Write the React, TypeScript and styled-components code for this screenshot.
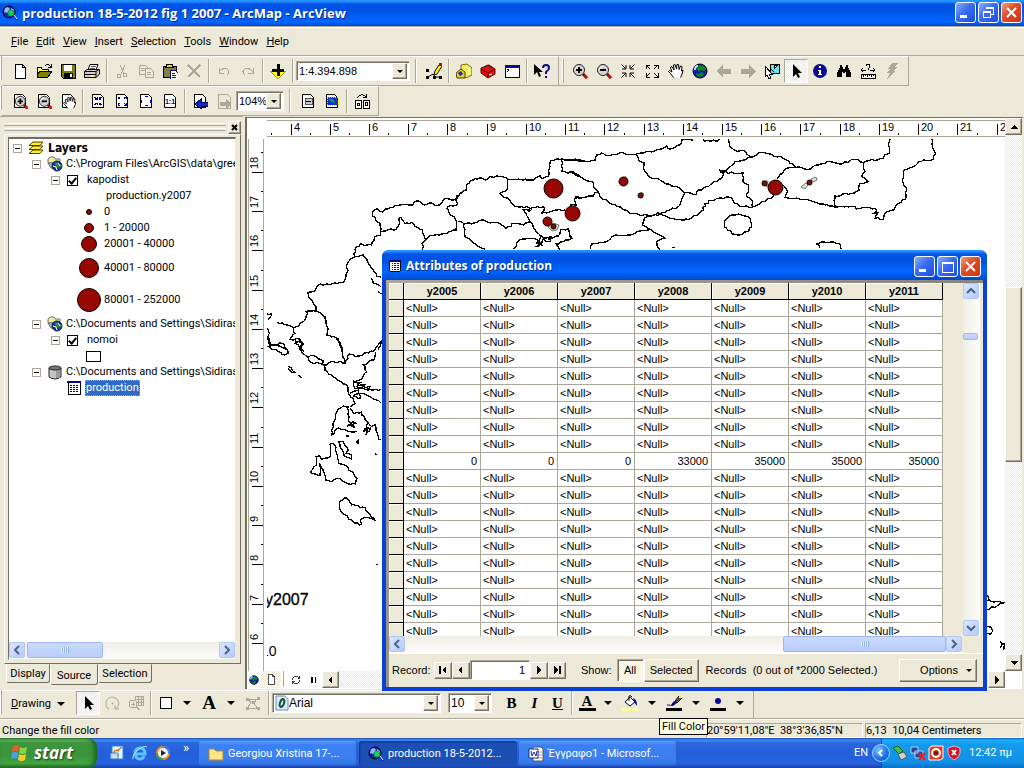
import React from 'react';
import styled, { createGlobalStyle, css } from 'styled-components';

const face = '#ece9d8';
const shade = '#aca899';
const dark = '#716f64';
const dither = 'repeating-conic-gradient(#ffffff 0 25%, #ece9d8 0 50%) 0 0 / 2px 2px';
const ui = 'Roboto, "Liberation Sans", sans-serif';
const classic = '"Liberation Sans", sans-serif';
const caption = '"Open Sans", "Noto Sans", sans-serif';

const GlobalStyle = createGlobalStyle`
  * { box-sizing: border-box; }
  html, body { margin: 0; padding: 0; }
  body { background: ${face}; font: 11px/16px ${ui}; color: #000; overflow: hidden; }
  button, input, select { font: inherit; color: inherit; margin: 0; }
  svg { display: block; flex: none; }
`;

const raised = css`
  background: ${face};
  border: 1px solid;
  border-color: #fff ${dark} ${dark} #fff;
  box-shadow: inset -1px -1px 0 ${shade};
`;
const sunken = css`
  border: 1px solid;
  border-color: ${shade} #fff #fff ${shade};
  box-shadow: inset 1px 1px 0 ${dark};
`;

/* ---------- icons ---------- */

const page = <path d="M2.5 1.500h8l3 3v10h-11z" fill="#fff" stroke="#000" />;
const lens = (
  <>
    <path d="M11 11l4 4" stroke="#600" strokeWidth="3" />
    <path d="M12 12l3 3" stroke="#e01010" strokeWidth="2" />
    <circle cx="7" cy="7" r="5.500" fill="#d4d4d4" stroke="#222" />
    <path d="M3 7q0-3 4-4" stroke="#fff" fill="none" />
  </>
);
const plus = <path d="M4 7h6M7 4v6" stroke="#000" strokeWidth="2" />;
const minus = <path d="M4 7h6" stroke="#000" strokeWidth="2" />;
const hand = (
  <path
    d="M5.500 14.500L2.500 10.500 .5 8.500 1.500 7.500 4 9 2.500 4.500 4 3.500 6 7 5.500 2 7 1.500 8.500 6 9 1.500 10.500 1.500 11 6.500 12.500 3 14 3.500 13.500 8 15 7 14.500 10 12.500 14.500"
    fill="#fff"
    stroke="#000"
  />
);
const earth = (
  <>
    <circle cx="8" cy="8" r="7" fill="#0a1fa8" stroke="#000" />
    <path d="M7 2l5 1 2 3-2 2-3-1-2 2-2-3zM4 10l3 1 3-2 2 2-3 3-4-1z" fill="#0a8a1c" />
    <path d="M3 7q0-4 3-4" stroke="#cfd6ff" strokeWidth="2" fill="none" />
  </>
);
const earthLens = (
  <>
    <circle cx="7" cy="7" r="6" fill="#1626b0" stroke="#000" />
    <path d="M3 3l3-1 2 2-3 4-3-1zM9 3l3 2-1 2-2-1z" fill="#9ab4ff" />
    <circle cx="9" cy="8" r="3" fill="#19d34c" stroke="#0a5" />
    <path d="M11 10l4 5" stroke="#1a1aff" strokeWidth="2" />
    <path d="M12 10l3 4" stroke="#fff" />
  </>
);
const arrowHead = <path d="M5 1v13l3-3 2 4 2-1-2-4h4z" fill="#000" />;
const table = (
  <>
    <path d="M2 2h12v12H2z" fill="#fff" stroke="#000" />
    <path d="M1 2h14" stroke="#0a0a80" strokeWidth="2" />
    <path d="M4 5h2M7 5h2M10 5h2M4 7h2M7 7h2M10 7h2M4 9h2M7 9h2M10 9h2M4 11h2M7 11h2M10 11h2" transform="translate(0 .5)" stroke="#000" />
  </>
);
const globeStack = (
  <>
    <path d="M1 3l2-2h4l1 2h5v4H1z" fill="#eee9a0" stroke="#777" />
    <path d="M1 7h9v5H4z" fill="#bbb" stroke="#666" />
    <circle cx="10" cy="10" r="5" fill="#1530c0" stroke="#123" />
    <path d="M8 6l3 1 1 4-3 1zM12 8l3 1-1 3z" fill="#18a030" />
    <path d="M6 10l3 1 1 3M11 7l2 3" stroke="#fff" fill="none" />
    <path d="M11 11l2-1-1 3z" fill="#d22" />
  </>
);

const icons: Record<string, React.ReactNode> = {
  none: null,
  new: <path d="M3 1h7l3 3v11H3zM10 1v3h3" fill="#fff" stroke="#000" />,
  open: (
    <>
      <path d="M1 13V4h4l1 2h6v3" fill="#ffff60" stroke="#000" />
      <path d="M1 13l3-5h12l-4 6H1z" fill="#808000" stroke="#000" />
      <path d="M9 3q3-3 5 0l1 1M15 1v3h-3" stroke="#000" fill="none" />
    </>
  ),
  save: (
    <>
      <path d="M1 1h14v14H3l-2-2z" fill="#808000" stroke="#000" />
      <path d="M4 2h8v6H4z" fill="#fff" />
      <path d="M4 10h9v5H4z" fill="#000" />
      <path d="M10 11h2v3h-2z" fill="#fff" />
    </>
  ),
  print: (
    <>
      <path d="M3.500 8L6 1.500h8L12 7" fill="#fff" stroke="#000" />
      <path d="M.5 8.500L3 6.500h12.500V11L12 14.500H.5z" fill="#d4d0c8" stroke="#000" />
      <path d="M.5 8.500H12v6M12 8.500l3-2M.5 11.500H12" stroke="#000" fill="none" />
      <path d="M7 3.500h5M6 5.500h5" stroke="#555" />
      <path d="M7 12h3v2H7z" fill="#ff0" />
    </>
  ),
  cut: (
    <>
      <path d="M6 2l4 9M11 2L7 11" stroke={shade} />
      <circle cx="5" cy="13" r="2" fill="none" stroke={shade} />
      <circle cx="11" cy="12" r="2" fill="none" stroke={shade} />
    </>
  ),
  copy: (
    <>
      <path d="M1 2h6l2 2v7H1zM3 5h4M3 7h4" fill={face} stroke={shade} />
      <path d="M7 5h5l3 3v6H7zM9 9h4M9 11h4" fill={face} stroke={shade} />
    </>
  ),
  paste: (
    <>
      <path d="M1 3h13v11H1z" fill="#808040" stroke="#000" />
      <path d="M4 4l1-3h5l1 3z" fill="#e8d838" stroke="#000" />
      <path d="M8 7h5l3 3v6H8zM10 10h3M10 12h4M10 14h4" fill="#fff" stroke="#0a0a80" />
    </>
  ),
  remove: <path d="M2 2l12 12M14 2L2 14" stroke={shade} strokeWidth="2" />,
  undo: <path d="M3 5v5h5M3 9q4-5 8-3 4 2 0 6" fill="none" stroke={shade} />,
  redo: <path d="M13 5v5H8M13 9Q9 4 5 6q-4 2 0 6" fill="none" stroke={shade} />,
  add: (
    <>
      <path d="M0 8h16l-8 8z" fill="#ff0" stroke="#a09a20" />
      <path d="M8 1v12M2 7h12" stroke="#000" strokeWidth="3" />
    </>
  ),
  edit: (
    <>
      <path d="M0 6h3v3H0zM0 13h3v3H0zM7 13h3v3H7zM13 13h3v3h-3z" fill="#000" />
      <path d="M2 14l5-3 2 3h5" fill="none" stroke="#000" />
      <path d="M9 8l4-6 3 1-5 8-3 1z" fill="#ff0" stroke="#000" />
      <path d="M13 0h3v3h-3z" fill="#c00" />
    </>
  ),
  catalog: (
    <>
      <path d="M5 2l6-1 5 4v7l-6 3-5-4z" fill="#f4ec58" stroke="#806c00" />
      <path d="M0 10l5-4 4 3v6H1z" fill="#e0d040" stroke="#504000" />
      <path d="M2 10l3-2 2 3-3 2z" fill="#1030b0" />
      <path d="M10 4l3 2v6" stroke="#fff" fill="none" />
    </>
  ),
  toolbox: (
    <>
      <path d="M1 5l8-3 6 4v5l-7 4-7-5z" fill="#e01010" stroke="#600" />
      <path d="M1 6l7 4 7-4M8 10v5" fill="none" stroke="#600" />
      <path d="M4 4l4-2 4 3" fill="none" stroke="#222" />
      <path d="M9 12l3-1" stroke="#fff" />
    </>
  ),
  command: (
    <>
      <path d="M1 2h14v12H1z" fill="#fff" stroke="#000" />
      <path d="M1 3h14" stroke="#0a0a90" strokeWidth="3" />
      <path d="M3 6l2 1-2 2" fill="none" stroke="#000" />
    </>
  ),
  whats: (
    <>
      <path d="M0 1v11l3-3 2 5 2-1-2-4h4z" fill="#000" />
      <path d="M9 5q0-3 3-3t3 3q0 2-3 4v2M12 13v2" fill="none" stroke="#0a0a90" strokeWidth="2" />
    </>
  ),
  zoomIn: <>{lens}{plus}</>,
  zoomOut: <>{lens}{minus}</>,
  shrink: <path d="M1.500 1.500l4 4M6 2v4H2M14.500 1.500l-4 4M10 2v4h4M1.500 14.500l4-4M6 14v-4H2M14.500 14.500l-4-4M10 14v-4h4" fill="none" stroke="#000" />,
  expand: <path d="M6 6L2 2M2 6V2h4M10 6l4-4M10 2h4v4M6 10l-4 4M2 10v4h4M10 10l4 4M10 14h4v-4" fill="none" stroke="#000" />,
  hand,
  earth,
  back: <path d="M0 8l7-6v4h8v5H7v4z" fill={shade} />,
  forward: <path d="M16 8L9 2v4H1v5h8v4z" fill={shade} />,
  select: (
    <>
      <path d="M6 1h9v9H6z" fill="#60e8f0" stroke="#000" />
      <path d="M6 5l4 4M10 2l4 0-4 4z" stroke="#000" fill="#fff" />
      <path d="M1 3v11l2-2 2 4 2-1-2-4h3z" fill="#fff" stroke="#000" />
    </>
  ),
  pointer: arrowHead,
  info: (
    <>
      <circle cx="8" cy="8" r="7" fill="#0a0a90" />
      <path d="M7 3h2v2H7zM6 7h3v4h1v1H6v-1h1V8H6z" fill="#fff" />
    </>
  ),
  find: (
    <path d="M4 2h2v2h1v2h2V4h1V2h2v2l3 6v4h-5V9H9v1H7V9H6v5H1v-4l3-6z" fill="#000" />
  ),
  measure: (
    <>
      <path d="M1 11h14v4H1z" fill="#fff" stroke="#000" />
      <path d="M3 12v2M5 12v1M7 12v2M9 12v1M11 12v2M13 12v1M1 7h5M10 7h5M3 5L1 7l2 2M13 5l2 2-2 2M6 3q0-2 2-2t2 2q0 1-2 3v1" fill="none" stroke="#000" />
    </>
  ),
  bolt: <path d="M8 0h6l-3 4h3L9 8h3L3 16l3-6H3l3-4H4z" fill={shade} />,
  pageIn: <>{page}<g transform="translate(2 2) scale(.9)">{lens}{plus}</g></>,
  pageOut: <>{page}<g transform="translate(2 2) scale(.9)">{lens}{minus}</g></>,
  pageHand: <>{page}<g transform="translate(3 3) scale(.85)">{hand}</g></>,
  pageShrink: <>{page}<path d="M4 4l3 2M7 4v2H5M12 4l-3 2M9 4v2h2M4 12l3-2M7 12v-2H5M12 12l-3-2M9 12v-2h2" fill="none" stroke="#000080" /></>,
  pageExpand: <>{page}<path d="M6 6L4 4M4 6V4h2M10 6l2-2M10 4h2v2M6 10l-2 2M4 10v2h2M10 10l2 2M10 12h2v-2" fill="none" stroke="#000080" /></>,
  pageWhole: <>{page}<path d="M7 3h3v1H7zM7 12h3v1H7zM3 7h1v3H3zM12 7h1v3h-1z" fill="#00a" /></>,
  pageOne: (
    <>
      {page}
      <text x="8" y="11" fontSize="7" fontWeight="700" textAnchor="middle" fill="#000080" fontFamily="Liberation Sans">1:1</text>
    </>
  ),
  pageBack: <>{page}<path d="M3 11l6-5v3h7v4H9v3z" fill="#0a2ad0" stroke="#000040" /></>,
  pageForward: (
    <>
      <path d="M2 1h9l3 3v11H2z" fill={face} stroke={shade} />
      <path d="M16 11l-6-5v3H4v4h6v3z" fill={shade} />
    </>
  ),
  draft: <>{page}<path d="M5 5h7v6H5z" fill="#ccc" stroke="#555" /><path d="M6 8h5" stroke="#000" /></>,
  focus: <>{page}<path d="M3 4h11v8H3z" fill="#1030e0" stroke="#e8e000" strokeDasharray="1 1" /><path d="M5 6l4 0 2 4-4-1z" fill="#18a018" /></>,
  layout: (
    <>
      <path d="M1 7h6v8H1zM9 7h6v8H9zM3 10h2v2H3zM11 9h2v3h-2z" fill="#fff" stroke="#000" />
      <path d="M3 5q4-6 9-1M12 1v3H9" fill="none" stroke="#000" />
    </>
  ),
  layers: (
    <path
      d="M1 13.500l4-3.500h10l-3 3.500zM1 9.500L5 6h10l-3 3.500zM1 5.500L5 2h10l-3 3.500z"
      fill="#ffee20"
      stroke="#4a4400"
    />
  ),
  globeStack,
  database: (
    <>
      <path d="M2 4v9q6 4 12 0V4z" fill="#c4c4c4" stroke="#222" />
      <path d="M9 6h4v8H9z" fill="#999" />
      <ellipse cx="8" cy="4" rx="6" ry="2" fill="#777" stroke="#222" />
    </>
  ),
  table,
  earthLens,
  rotate: <path d="M5 14H4Q1 11 2 7q2-5 7-5 5 1 6 6 0 4-4 6v-4M11 14h4M8 8h1v1H8z" fill="none" stroke={shade} />,
  zoomSel: (
    <>
      <path d="M7 1h8v9H7zM7 4h8M7 7h8M10 1v9M13 1v9" fill="none" stroke={shade} />
      <circle cx="5" cy="9" r="4" fill={face} stroke={shade} />
      <path d="M3 9h4M5 7v4M8 12l4 3" stroke={shade} />
    </>
  ),
  square: <path d="M2 2h11v11H2z" fill="#fff" stroke="#000" />,
  vertices: (
    <>
      <path d="M3 4h9l-3 4 3 5H2l4-5z" fill="none" stroke={shade} />
      <path d="M1 3h3v3H1zM12 2h3v3h-3zM7 6h3v3H7zM1 12h3v3H1zM12 12h3v3h-3z" fill={shade} />
    </>
  ),
  bucket: (
    <>
      <path d="M3 7l5-5 5 5-5 4z" fill="#fff" stroke="#000" />
      <path d="M7 6V1q2-1 3 1" fill="none" stroke="#000" />
      <path d="M11 3q4 1 4 8l-3-4z" fill="#0a0a90" />
      <path d="M0 13h16v3H0z" fill="#ffffa8" />
    </>
  ),
  brush: (
    <>
      <path d="M1 10h3" stroke="#0a0a90" />
      <path d="M4 11l4-5 3 2-4 3z" fill="#0a0a90" />
      <path d="M9 6l4-5 3 2-5 5z" fill="#555" stroke="#000" />
      <path d="M13 0h3v3h-3z" fill="#ff0" />
      <path d="M0 13h16v3H0z" fill="#000" />
    </>
  ),
  dot: (
    <>
      <circle cx="8" cy="6" r="3" fill="#0a0a90" />
      <path d="M0 13h16v3H0z" fill="#000" />
    </>
  ),
  refresh: <path d="M3 8q0-5 5-5 3 0 4 3M13 3v3h-3M13 8q0 5-5 5-3 0-4-3M3 13v-3h3" fill="none" stroke="#000" />,
  pause: <path d="M4 4h2v8H4zM9 4h2v8H9z" fill="#000" />,
  folder: (
    <path d="M1 14V3h5l2 2h7v9z" fill="#ffe48a" stroke="#b98a1c" />
  ),
  word: (
    <>
      <path d="M5 1h8l2 2v12H5z" fill="#fff" stroke="#555" />
      <path d="M8 6h6M8 9h6M8 12h6" stroke="#99a" />
      <path d="M1 3h9v9H1z" fill="#fff" stroke="#1b2a9a" />
      <path d="M3 5l1 5 2-4 2 4 1-5" fill="none" stroke="#1b2a9a" />
    </>
  ),
  outlook: (
    <>
      <path d="M3 1h11v13H3z" fill="#e8f4ff" stroke="#2f86e0" />
      <path d="M10 6q-5-2-5 2 1 4 5 2M8 6l5-4" fill="none" stroke="#d77a12" strokeWidth="1.5" />
      <path d="M1 8h8v6H1z" fill="#cfe6ff" stroke="#1b6fd0" opacity=".8" />
    </>
  ),
  ie: (
    <>
      <path d="M3 9h10q0-6-5-6T3 9q1 5 5 5 3 0 4-3" fill="none" stroke="#5cc4ff" strokeWidth="3" />
      <path d="M1 14Q0 10 6 5t9-3" fill="none" stroke="#c5ebff" />
    </>
  ),
  media: (
    <>
      <circle cx="8" cy="8" r="7" fill="#f58a1f" />
      <path d="M8 1a7 7 0 0 1 7 7H8z" fill="#3a7ff0" />
      <path d="M1 8a7 7 0 0 0 7 7V8z" fill="#36a93b" />
      <circle cx="8" cy="8" r="5" fill="#f4f6ff" />
      <path d="M6 5l5 3-5 3z" fill="#222" />
    </>
  ),
  usb: (
    <>
      <path d="M1 3l5-2 5 5-4 3z" fill="#3fbf3f" stroke="#145c14" />
      <path d="M6 9l6-2 3 5-6 3z" fill="#cfd4da" stroke="#555" />
    </>
  ),
  network: (
    <>
      <path d="M1 2h7v6H1zM5 6h8v7H5z" fill="#29449a" stroke="#bcc7e6" />
      <path d="M9 8l6 7M15 8l-6 7" stroke="#f01818" strokeWidth="2" />
    </>
  ),
  target: (
    <>
      <path d="M1 3l3-2h11v12l-3 2H1z" fill="#e13a1c" stroke="#fff" />
      <circle cx="8" cy="8" r="4" fill="none" stroke="#fff" strokeWidth="2" />
      <circle cx="8" cy="8" r="2" fill="#7a1208" />
    </>
  ),
  shield: (
    <>
      <path d="M8 1l6 2v5q0 4-6 7-6-3-6-7V3z" fill="#d2142a" stroke="#f0b0b0" />
      <path d="M6 5l4 5M10 5l-4 5" stroke="#fff" strokeWidth="2" />
    </>
  ),
};

const smooth = [
  'outlook', 'ie', 'media', 'usb', 'network', 'target', 'shield', 'folder', 'word', 'earthLens', 'pageOne', 'whats',
  'zoomIn', 'zoomOut', 'pageIn', 'pageOut', 'pageHand', 'hand', 'print', 'layers', 'toolbox', 'catalog', 'shrink',
  'earth', 'globeStack', 'database', 'info', 'pointer', 'edit', 'bucket', 'brush', 'dot', 'rotate',
];

function Icon({ name, size = 16 }: { name: string; size?: number }) {
  return (
    <svg
      width={size}
      height={size}
      viewBox="0 0 16 16"
      fill="none"
      shapeRendering={smooth.includes(name) ? 'auto' : 'crispEdges'}
      aria-hidden="true"
    >
      {icons[name]}
    </svg>
  );
}

/* ---------- shared controls ---------- */

const Down = styled.span`
  border: 4px solid transparent;
  border-top-color: #000;
  border-bottom: 0;
`;
const SmallDown = styled(Down)`
  border-width: 3px 3px 0;
`;

const Tool = styled.button<{ $pressed?: boolean; $w?: number }>`
  width: ${(p) => p.$w ?? 24}px;
  height: 24px;
  padding: 0;
  flex: none;
  display: flex;
  align-items: center;
  justify-content: center;
  border: 1px solid transparent;
  background: transparent;
  ${(p) => p.$pressed && css`
    background: ${dither};
    border-color: ${shade} #fff #fff ${shade};
  `}
`;

const Sep = styled.span<{ $gap?: number }>`
  flex: none;
  width: 2px;
  height: 24px;
  margin: 0 ${(p) => p.$gap ?? 2}px;
  border-left: 1px solid ${shade};
  border-right: 1px solid #fff;
`;

const Band = styled.div`
  height: 30px;
  flex: none;
  display: flex;
  align-items: stretch;
`;
const Bar = styled.div<{ $start?: boolean }>`
  display: flex;
  align-items: center;
  padding: 0 4px 0 ${(p) => (p.$start ? 6 : 3)}px;
  border-top: 1px solid #fff;
  border-bottom: 1px solid ${shade};
  border-right: 1px solid ${shade};
`;
const DrawBar = styled(Bar)`
  padding-bottom: 3px;
  border-bottom: 0;
`;
const Grip = styled.span<{ $after?: number }>`
  width: 2px;
  height: 24px;
  flex: none;
  margin-right: ${(p) => p.$after ?? 0}px;
  border-right: 1px solid ${shade};
  border-left: 1px solid #fff;
`;

const ComboBox = styled.label<{ $w: number; $size: number }>`
  ${sunken}
  width: ${(p) => p.$w}px;
  height: 20px;
  flex: none;
  display: flex;
  align-items: center;
  padding: 2px;
  background: #fff;
  font: ${(p) => p.$size}px/16px ${classic};
  select {
    appearance: none;
    flex: 1;
    min-width: 0;
    border: 0;
    padding: 0;
    background: transparent;
  }
`;
const ComboArrow = styled.span`
  ${raised}
  width: 15px;
  height: 16px;
  flex: none;
  display: flex;
  align-items: center;
  justify-content: center;
`;

interface ComboProps { w: number; value: string; label: string; size?: number; icon?: React.ReactNode }
function Combo({ w, value, label, size = 12, icon }: ComboProps) {
  return (
    <ComboBox $w={w} $size={size}>
      {icon}
      <select aria-label={label} defaultValue={value}>
        <option>{value}</option>
      </select>
      <ComboArrow><SmallDown /></ComboArrow>
    </ComboBox>
  );
}

function Tools({ names, pressed, w }: { names: string[]; pressed?: string; w?: number }) {
  return (
    <>
      {names.map((n) => (
        <Tool key={n} aria-label={n} $pressed={n === pressed} $w={w}>
          <Icon name={n} />
        </Tool>
      ))}
    </>
  );
}

/* ---------- application frame ---------- */

const Screen = styled.div`
  height: 100vh;
  display: flex;
  flex-direction: column;
  position: relative;
  background: ${face};
`;

const blueBar = 'linear-gradient(#0997ff 0, #3a93ff 1px, #0055ea 4px, #0050e0 10px, #0062fa 18px, #0066ff 22px, #0048d0 100%)';

const TitleBar = styled.header`
  height: 27px;
  flex: none;
  display: flex;
  align-items: center;
  gap: 4px;
  padding: 0 2px 1px 2px;
  background: ${blueBar};
  border-bottom: 1px solid ${shade};
`;
const Caption = styled.h1<{ $small?: boolean }>`
  flex: 1;
  margin: 0;
  font: 700 ${(p) => (p.$small ? 12 : 13)}px/20px ${caption};
  color: #fff;
  text-shadow: 1px 1px 0 #0a2a8a;
  white-space: nowrap;
`;
const Controls = styled.div`
  display: flex;
  gap: 2px;
`;
const Control = styled.button<{ $close?: boolean }>`
  width: 21px;
  height: 21px;
  padding: 0;
  display: flex;
  align-items: center;
  justify-content: center;
  border: 1px solid #fff;
  border-radius: 3px;
  background: ${(p) =>
    p.$close
      ? 'linear-gradient(135deg, #f0a088, #e0502c 40%, #c83410)'
      : 'linear-gradient(135deg, #8ab0fa, #3a6cf0 45%, #1c4fe0)'};
`;

function WindowControls({ restore }: { restore?: boolean }) {
  return (
    <Controls>
      <Control aria-label="Minimize">
        <svg width="15" height="15" viewBox="0 0 15 15"><path d="M2 10h7v3H2z" fill="#fff" /></svg>
      </Control>
      <Control aria-label={restore ? 'Restore' : 'Maximize'}>
        <svg width="15" height="15" viewBox="0 0 15 15" fill="none" stroke="#fff" shapeRendering="crispEdges">
          {restore
            ? <path d="M5 4V2h7v7h-2M5 3h7M2.5 6.500h7v6h-7zM2 7h8" />
            : <path d="M2 3h11v10H2zM2 4h11" />}
        </svg>
      </Control>
      <Control aria-label="Close" $close>
        <svg width="15" height="15" viewBox="0 0 15 15"><path d="M3 3l9 9M12 3l-9 9" stroke="#fff" strokeWidth="2" /></svg>
      </Control>
    </Controls>
  );
}

const Menu = styled.nav`
  height: 29px;
  flex: none;
  display: flex;
  align-items: center;
  padding: 1px 0 0 7px;
  border-top: 1px solid #fff;
  border-bottom: 1px solid ${shade};
  button {
    border: 0;
    background: none;
    padding: 0 4px;
  }
`;

const Workspace = styled.main`
  flex: 1;
  min-height: 0;
  display: flex;
`;

/* ---------- table of contents ---------- */

const Toc = styled.aside`
  width: 243px;
  flex: none;
  display: flex;
  flex-direction: column;
  padding: 3px 2px 4px 4px;
  border-top: 1px solid ${shade};
`;
const DockBar = styled.div`
  display: flex;
  align-items: center;
  gap: 2px;
  height: 14px;
`;
const DockLines = styled.span`
  flex: 1;
  height: 8px;
  border: 1px solid;
  border-color: #fff transparent ${shade};
  background: linear-gradient(${face} 1px, ${shade} 1px 2px, ${face} 2px 4px, #fff 4px 5px, ${face} 5px);
`;
const DockClose = styled.button`
  ${raised}
  width: 13px;
  height: 13px;
  padding: 0;
  display: flex;
  align-items: center;
  justify-content: center;
`;
const TocFrame = styled.div`
  flex: 1;
  min-height: 0;
  display: flex;
  padding: 2px 4px 3px 3px;
  border: 1px solid;
  border-color: #fff ${dark} ${dark} #fff;
`;
const TocBox = styled.div`
  flex: 1;
  min-width: 0;
  display: flex;
  flex-direction: column;
  justify-content: space-between;
  background: #fff;
  border: 1px solid;
  border-color: ${dark} ${face} ${face} ${dark};
  border-top-width: 2px;
`;
const Tree = styled.ul`
  list-style: none;
  margin: 0;
  padding: 1px 0 0;
  overflow: hidden;
`;
const Node = styled.li<{ $indent: number; $h?: number }>`
  height: ${(p) => p.$h ?? 16}px;
  padding-left: ${(p) => p.$indent}px;
  display: flex;
  align-items: center;
  white-space: nowrap;
`;
const Twisty = styled.button`
  width: 9px;
  height: 9px;
  padding: 0;
  flex: none;
  margin-right: 6px;
  border: 1px solid ${shade};
  background: linear-gradient(#000, #000) center / 5px 1px no-repeat #fff;
`;
const NodeText = styled.span<{ $bold?: boolean; $on?: boolean; $gap?: number }>`
  margin-left: ${(p) => p.$gap ?? 3}px;
  padding: 0 1px;
  ${(p) => p.$bold && css`font-weight: 700; font-size: 12px; font-family: "DejaVu Sans Condensed", sans-serif;`}
  ${(p) => p.$on && css`background: #316ac5; color: #fff; outline: 1px dotted #cfa35a; outline-offset: -1px;`}
`;
const PathText = styled(NodeText)`
  margin-left: 2px;
`;
const Check = styled.input`
  appearance: none;
  width: 11px;
  height: 11px;
  flex: none;
  margin: 0 5px 0 1px;
  border: 1px solid #000;
  background: #fff;
  &:checked::before {
    content: '';
    display: block;
    width: 3px;
    height: 6px;
    margin: 0 auto;
    border: solid #000;
    border-width: 0 2px 2px 0;
    rotate: 40deg;
  }
`;
const CheckLabel = styled.label`
  display: flex;
  align-items: center;
`;
const SymbolCell = styled.span`
  width: 26px;
  flex: none;
  display: flex;
  justify-content: center;
`;
const Disc = styled.span<{ $d: number }>`
  width: ${(p) => p.$d}px;
  height: ${(p) => p.$d}px;
  border-radius: 50%;
  border: 1px solid #000;
  background: #980800;
`;
const Swatch = styled.span`
  width: 15px;
  height: 11px;
  border: 1px solid #000;
  background: #fff;
`;
const TabRow = styled.div`
  display: flex;
  align-items: flex-start;
  height: 22px;
  padding-left: 2px;
`;
const Tab = styled.button<{ $active?: boolean; $w: number }>`
  width: ${(p) => p.$w}px;
  height: ${(p) => (p.$active ? 21 : 19)}px;
  padding: ${(p) => (p.$active ? '3px' : '0')} 0 0;
  border: 1px solid;
  border-color: ${face} ${dark} ${dark} #fff;
  border-radius: 0 0 3px 3px;
  background: ${face};
`;

/* ---------- Luna scroll bars ---------- */

const LunaBar = styled.div<{ $vertical?: boolean; $corner?: boolean }>`
  display: flex;
  flex: none;
  flex-direction: ${(p) => (p.$vertical ? 'column' : 'row')};
  background: ${(p) => `linear-gradient(${p.$vertical ? 'to right' : 'to bottom'}, #efeee6, #fdfdfb)`};
  ${(p) => (p.$vertical ? 'width: 17px;' : 'height: 17px;')}
  ${(p) => p.$corner && 'margin-right: 21px;'}
`;
const LunaButton = styled.button`
  width: 16px;
  height: 16px;
  flex: none;
  padding: 0;
  display: flex;
  align-items: center;
  justify-content: center;
  border: 1px solid #b4c8f6;
  border-radius: 2px;
  background: linear-gradient(135deg, #dce8ff, #b4c9fa);
`;
const LunaThumb = styled.span<{ $vertical?: boolean; $size: number }>`
  display: flex;
  align-items: center;
  justify-content: center;
  flex: none;
  ${(p) => (p.$vertical ? `height: ${p.$size}px; width: 15px;` : `width: ${p.$size}px; height: 16px;`)}
  border: 1px solid #9db8f2;
  border-radius: 2px;
  background: linear-gradient(#cbdafe, #b9cdfb);
`;
const Ridges = styled.span`
  width: 8px;
  height: 6px;
  background: repeating-linear-gradient(to right, #eef4fe 0 1px, #8cb0f8 1px 2px);
`;
const Space = styled.span<{ $grow: number }>`
  flex: ${(p) => p.$grow} 1 0;
`;

const chevrons: Record<string, string> = {
  left: 'M8 2L4 6l4 4',
  right: 'M4 2l4 4-4 4',
  up: 'M2 8l4-4 4 4',
  down: 'M2 4l4 4 4-4',
};
function Chevron({ dir }: { dir: string }) {
  return (
    <LunaButton aria-label={`Scroll ${dir}`}>
      <svg width="12" height="12" viewBox="0 0 12 12">
        <path d={chevrons[dir]} fill="none" stroke="#4d6185" strokeWidth="2" />
      </svg>
    </LunaButton>
  );
}

/* ---------- layout view ---------- */

const MapView = styled.section`
  flex: 1;
  min-width: 0;
  margin: 1px 0 1px 2px;
  border: 2px solid;
  border-color: ${dark} ${face} ${face} ${dark};
  border-width: 1px 2px 0 2px;
  background: #fff;
  display: grid;
  grid-template: 21px minmax(0, 1fr) 18px / 20px minmax(0, 1fr) 17px;
`;
const RulerTop = styled.div`
  height: 17px;
  margin-top: 2px;
  overflow: hidden;
  border-top: 1px solid ${shade};
  border-bottom: 1px solid ${shade};
`;
const RulerSide = styled.div`
  margin: 0 3px 0 1px;
  overflow: hidden;
  border-left: 1px solid ${shade};
  border-right: 1px solid ${shade};
`;
const Sheet = styled.div`
  overflow: hidden;
`;
const ClassicBar = styled.div<{ $vertical?: boolean }>`
  display: flex;
  flex-direction: ${(p) => (p.$vertical ? 'column' : 'row')};
  flex: 1;
  ${(p) => p.$vertical && 'grid-row: 1 / 3; grid-column: 3;'}
  background: ${dither};
`;
const ClassicButton = styled.button`
  ${raised}
  width: 17px;
  height: 17px;
  flex: none;
  padding: 0;
  display: flex;
  align-items: center;
  justify-content: center;
`;
const ClassicThumb = styled.span`
  ${raised}
  height: 175px;
  flex: none;
`;
const ViewBar = styled.div`
  grid-column: 1 / 3;
  display: flex;
  align-items: flex-start;
`;
const ViewTool = styled.button<{ $pressed?: boolean; $w: number }>`
  width: ${(p) => p.$w}px;
  height: 17px;
  padding: 0;
  border: 0;
  display: flex;
  align-items: center;
  justify-content: center;
  background: ${(p) => (p.$pressed ? dither : 'transparent')};
`;
const ViewSep = styled(Sep)`
  height: 16px;
`;

const triangles: Record<string, string> = {
  left: 'M6 1v8L2 5z',
  right: 'M3 1v8l4-4z',
  up: 'M1 7h8L5 3z',
  down: 'M1 3h8L5 7z',
  first: 'M1 1h2v8H1zM8 1v8L4 5z',
  last: 'M7 1h2v8H7zM2 1v8l4-4z',
};
function Triangle({ dir }: { dir: string }) {
  return (
    <svg width="10" height="10" viewBox="0 0 10 10" shapeRendering="crispEdges">
      <path d={triangles[dir]} fill="#000" />
    </svg>
  );
}

/* Region outlines, grouped by survey tile; each tile is stored at triple scale. */
const tiles: { x: number; y: number; lines: string[] }[] = [
  {
    x: 240,
    y: 110,
    lines: [
      '1022 150 980 150 968 147 945 150 932 152 930 170 926 200 910 205 900 197 880 210 840 208 802 208 800 202 770 198 750 200 735 210 720 203 700 210 682 222 678 240 660 250 650 258 648 268 612 268 605 280 585 286 570 278 555 285 535 272 520 280 518 285 475 286 450 292 432 302 420 304 412 296 400 302 398 318 420 340 422 375 404 380 395 405 375 408 362 402 345 418 344 440 330 448 320 465 324 480 318 500 310 518 275 522 235 525 225 543 203 548 205 560 215 570 228 590 232 605 198 604 203 610 195 630 180 640 170 650 160 654 140 645 112 637',
      '965 150 965 185 985 190 998 184 1020 200',
      '802 208 803 235 780 250 790 262 805 265 820 285 840 292 860 290 875 298 865 305',
      '656 255 648 272 654 282 622 290 628 310 645 325 650 340 648 360 620 370 590 374 565 380 550 395 547 420',
      '424 364 440 362 468 358 478 342 476 325 484 322 495 340 515 338 525 350 548 360 552 375 560 390',
      '654 335 680 340 695 342 725 330 760 338 780 340 798 355 825 340 850 345 870 335 862 320 850 300 870 298',
      '672 342 675 380 700 398 720 412 735 418',
      '870 335 880 355 900 375 898 390 890 400 905 398 895 405 910 388 930 395 935 380 915 385 900 375',
      '862 298 885 292 910 290 912 302 905 310 930 305 950 300 975 300',
      '1005 262 1020 262',
      '820 418 835 392 870 385 890 388 905 405 885 410',
      '925 388 955 378 962 360 985 356 988 375 995 385 970 395 948 402 960 418',
      '345 440 370 435 385 460 400 480 410 500 424 502',
      '395 505 400 520 424 530',
      '415 545 424 552',
      '232 605 255 620 262 650 260 675 295 685 300 705 304 722',
      '82 612 95 610 90 622 84 628',
      '82 655 88 670 84 690 100 705 125 700 140 715',
      '160 654 165 670 150 688 160 690 175 685 190 700 185 715 165 700 178 695',
      '424 690 415 720',
    ],
  },
  {
    x: 570,
    y: 110,
    lines: [
      '0 148 40 153 75 150 80 135 100 130 115 137 150 128 180 133 200 132 240 125 270 118 290 108 300 117 330 105 335 90 368 90',
      '398 88 405 94 430 90 445 92 450 86',
      '475 86 478 105 495 120 525 125 545 142 575 128 600 132 640 145 660 160 678 172 715 178 745 165 780 155 810 162 855 148 880 158 900 152 940 145 945 135 958 130 955 105 962 86',
      '545 142 520 150 495 155 465 182 450 180 462 190',
      '200 135 205 152 222 158 220 175 235 200 270 210 290 222 325 232 345 248 380 252 385 240 400 235 420 225 455 205 460 187 510 190 520 188 518 215 535 225 530 260 545 270 548 292',
      '0 185 30 200 65 215 75 235 85 245 90 260 115 275 140 290 165 300 180 310 240 318 300 300 330 285 345 250',
      '240 318 270 312 300 325 335 330 365 325 400 300 405 280 440 265 480 262 495 280 520 290 545 292 590 268 610 260 615 240',
      '620 205 640 185 648 175 675 172',
      '640 225 652 245 645 262 685 265 720 272 740 278 780 288 830 290 870 295 900 292 920 300 908 312 925 308 915 325 940 327 945 310 970 300 985 280 1005 268 1010 240 998 215 1003 178 1030 170 1060 150 1090 148 1097 130 1088 115 1085 86',
      '880 158 885 185 875 200 895 215 870 220 868 240 845 250 795 258 795 288',
      '85 245 70 258 40 262 15 265 18 285 0 285',
      '505 312 515 315 540 325 545 350 530 365 505 375 475 362 463 350 468 328 485 315 505 312',
      '240 318 222 330 218 345 240 357 250 365 285 385 260 395 262 412 270 418',
      '240 357 215 362 175 375 135 375 115 392 65 402 62 418',
      '750 412 740 402 755 396 790 396 812 405 815 418',
      '305 413 316 413',
      '0 376 4 388',
    ],
  },
  {
    x: 240,
    y: 340,
    lines: [
      '290 -4 305 20 308 45 315 70 328 42 355 48 380 38 400 35 420 8',
      '82 20 105 15 120 18 140 28 145 40 135 45 115 35 90 22 85 -8',
      '165 0 185 10 180 28 190 42 205 55 215 68 245 72 250 75 275 65 315 68',
      '175 -4 190 12 178 20 192 34',
      '205 52 220 46 250 62 248 72',
      '250 75 255 90 280 110 320 135 325 160 340 175 345 190 330 200',
      '408 38 400 60 370 75 380 95 360 120 340 130 345 145 370 140 395 150 424 148',
      '340 122 360 128 352 138 375 134 365 145 390 140 385 150 350 142',
      '330 160 355 150 360 175 340 168 365 160 390 170 410 180 424 190',
      '328 200 310 198 290 215 285 240 275 270 275 285 290 265 320 272 350 275',
      '325 200 325 240 345 262 322 258 350 250 325 245',
      '330 205 345 222 365 215 375 240 385 250 370 275 385 262 378 285 392 260',
      '385 250 395 260 405 255 412 280 415 298 424 300',
      '270 312 285 315 292 345 295 370 320 378 335 395 352 415 345 432 325 432 292 415 275 425 258 420 250 395 238 370 243 385 240 405 215 400 212 395 222 380 230 375 228 350 238 347 245 358 270 350 272 330 270 312',
      '295 305 310 305 325 330 318 340 335 345 335 358 320 352 310 335 300 320 295 305',
      '318 473 325 480 335 495 355 498 375 503 380 515 405 540 380 532 362 538 365 552 358 556 340 545 315 525 298 505 298 485 318 473',
      '145 80 155 85 165 98 155 98 145 85',
      '174 105 186 113',
      '320 285 326 288 319 290',
      '347 308 355 300 355 309 347 308',
      '405 342 410 343',
      '407 673 413 675',
    ],
  },
  {
    x: 987,
    y: 590,
    lines: [
      '0 15 6 30 0 32 30 35 50 40',
      '0 58 30 48 54 36',
      '0 110 12 112 16 125 10 132 0 130',
      '38 155 45 160 40 172 54 160 48 178 56 170',
    ],
  },
];

/* Breaks each straight run into short uneven steps so borders read as surveyed coastline. */
function coast(points: string, seed: number): string {
  const n = points.split(' ').map(Number);
  let s = seed * 7919 + 17;
  const wobble = () => {
    s = (s * 16807) % 2147483647;
    return ((s % 1000) / 1000 - 0.5) * 6;
  };
  let d = `M${n[0]} ${n[1]}`;
  for (let i = 2; i < n.length; i += 2) {
    const dx = n[i] - n[i - 2];
    const dy = n[i + 1] - n[i - 1];
    const steps = Math.max(1, Math.round(Math.hypot(dx, dy) / 8));
    for (let k = 1; k < steps; k++) {
      d += `L${n[i - 2] + (dx * k) / steps + wobble()} ${n[i - 1] + (dy * k) / steps + wobble()}`;
    }
    d += `L${n[i]} ${n[i + 1]}`;
  }
  return d;
}

const marks: [number, number, number][] = [
  [553, 188, 9], [572, 213, 7], [547, 221, 4], [553, 226, 2],
  [623, 181, 4], [640, 195, 2], [764, 183, 2], [775, 187, 7], [809, 182, 2],
];

function GreeceMap() {
  return (
    <svg width="738" height="532" viewBox="267 139 738 532" shapeRendering="crispEdges" role="img" aria-label="Map of Greece">
      {tiles.map((t, i) => (
        <g key={i} transform={`translate(${t.x} ${t.y}) scale(.33333)`}>
          {t.lines.map((l, k) => (
            <path key={k} d={coast(l, i * 40 + k + 1)} fill="none" stroke="#000" strokeWidth="4" />
          ))}
        </g>
      ))}
      <g shapeRendering="auto">
        <path d="M801 187l5-4 2 2-3 4zM811 179l5-2 1 3-4 2zM548 227l5-4 6 2-2 5-5 1zM762 181l6 0-1 6zM641 192l3 2-2 4zM625 176l2 3" fill="#dfe6d0" stroke="#777" />
        {marks.map(([x, y, r]) => (
          <circle key={`${x}-${y}`} cx={x + 0.5} cy={y + 0.5} r={r + 0.5} fill="#980800" stroke="#000" />
        ))}
      </g>
      <text x="265" y="605" fontFamily="Liberation Sans" fontSize="16" stroke="#000" strokeWidth=".3">y2007</text>
      <text x="261" y="656" fontFamily="Liberation Sans" fontSize="14">10</text>
    </svg>
  );
}

const step = 39.23;
function HorizontalRuler() {
  return (
    <svg width="738" height="15" viewBox="267 121 738 15" shapeRendering="crispEdges" stroke="#000" aria-hidden="true">
      {Array.from({ length: 19 }, (_, i) => {
        const x = Math.round(290.5 + i * step);
        return (
          <g key={i}>
            <path d={`M${x}.5 124v11M${Math.round(x - step / 2)}.5 133v2`} />
            <text x={x + 3} y="131" fontSize="11" fontFamily="Liberation Sans" stroke="none">{i + 4}</text>
          </g>
        );
      })}
    </svg>
  );
}
function VerticalRuler() {
  return (
    <svg width="15" height="532" viewBox="249 139 15 532" shapeRendering="crispEdges" stroke="#000" aria-hidden="true">
      {Array.from({ length: 13 }, (_, i) => {
        const y = Math.round(172 + i * step);
        return (
          <g key={i}>
            <path d={`M252 ${y}.5h11M261 ${Math.round(y - step / 2)}.5h2`} />
            <text transform={`translate(258 ${y - 3}) rotate(-90)`} fontSize="11" fontFamily="Liberation Sans" stroke="none">{18 - i}</text>
          </g>
        );
      })}
    </svg>
  );
}

/* ---------- attribute window ---------- */

const Dialog = styled.section`
  position: absolute;
  left: 382px;
  top: 250px;
  width: 605px;
  height: 441px;
  display: flex;
  flex-direction: column;
  border: solid #0a3fd8;
  border-width: 0 4px 4px;
  border-radius: 7px 7px 0 0;
  background: ${face};
`;
const DialogTitle = styled.header`
  height: 30px;
  flex: none;
  display: flex;
  align-items: center;
  gap: 4px;
  margin: 0 -4px;
  padding: 2px 6px 0 6px;
  border-radius: 7px 7px 0 0;
  background: ${blueBar};
`;
const DialogBody = styled.div`
  flex: 1;
  min-height: 0;
  display: flex;
  flex-direction: column;
  border: solid ${dark};
  border-width: 3px 0 0 3px;
  border-image: linear-gradient(135deg, ${shade}, ${dark}) 3;
`;
const GridRow = styled.div`
  display: flex;
  height: 353px;
  padding-right: 3px;
`;
const GridView = styled.div`
  flex: 1;
  min-width: 0;
  overflow: hidden;
`;
const Grid = styled.table`
  table-layout: fixed;
  width: 554px;
  border-collapse: separate;
  border-spacing: 0;
  font: 11px/14px ${classic};
  th, td {
    height: 17px;
    padding: 0 3px 0 2px;
    overflow: hidden;
  }
  thead th {
    font-weight: 700;
    padding: 0;
    background: ${face};
    border: solid #000;
    border-width: 0 1px 1px 0;
    box-shadow: inset 1px 1px 0 #fff;
  }
  tbody th {
    background: ${face};
    border: solid #000;
    border-width: 0 1px 1px 0;
    box-shadow: inset 1px 1px 0 #fff;
  }
  td {
    background: #fff;
    border: solid ${shade};
    border-width: 0 1px 1px 0;
    line-height: 16px;
  }
  col:first-child { width: 15px; }
`;
const Cell = styled.td<{ $num?: boolean }>`
  text-align: ${(p) => (p.$num ? 'right' : 'left')};
`;
const Footer = styled.footer`
  flex: 1;
  display: flex;
  align-items: center;
  padding: 0 6px 1px 3px;
  border-top: 1px solid #fff;
  font: 11px/16px ${classic};
  white-space: nowrap;
`;
const RecordButton = styled(ClassicButton)`
  width: 18px;
`;
const RecordInput = styled.input`
  ${sunken}
  width: 60px;
  height: 20px;
  padding: 0 4px;
  text-align: right;
  border-radius: 0;
  background: #fff;
`;
const PushButton = styled.button<{ $w: number; $pressed?: boolean }>`
  ${(p) => (p.$pressed ? sunken : raised)}
  background: ${(p) => (p.$pressed ? dither : face)};
  width: ${(p) => p.$w}px;
  height: 23px;
  padding: 0;
  display: flex;
  align-items: center;
  justify-content: center;
`;
const OptionsButton = styled(PushButton)`
  justify-content: flex-end;
  gap: 8px;
  padding-right: 4px;
`;
const RecordLabel = styled.label`
  width: 42px;
`;
const ShowLabel = styled.span`
  padding: 0 5px 0 15px;
`;
const RecordCount = styled.span`
  flex: 1;
  padding-left: 7px;
  white-space: pre;
`;

const years = ['y2005', 'y2006', 'y2007', 'y2008', 'y2009', 'y2010', 'y2011'];
const filled = ['0', '0', '0', '33000', '35000', '35000', '35000'];
const filledRow = 9;

function AttributeWindow() {
  return (
    <Dialog aria-label="Attributes of production">
      <DialogTitle>
        <Icon name="table" size={14} />
        <Caption as="h2" $small>Attributes of production</Caption>
        <WindowControls />
      </DialogTitle>
      <DialogBody>
        <GridRow>
          <GridView>
            <Grid>
              <colgroup>
                <col />
                {years.map((y) => <col key={y} />)}
              </colgroup>
              <thead>
                <tr>
                  <th />
                  {years.map((y) => <th key={y} scope="col">{y}</th>)}
                </tr>
              </thead>
              <tbody>
                {Array.from({ length: 20 }, (_, r) => (
                  <tr key={r}>
                    <th scope="row" />
                    {years.map((y, c) => (
                      <Cell key={y} $num={r === filledRow}>{r === filledRow ? filled[c] : '<Null>'}</Cell>
                    ))}
                  </tr>
                ))}
              </tbody>
            </Grid>
          </GridView>
          <LunaBar $vertical>
            <Chevron dir="up" />
            <Space $grow={34} />
            <LunaThumb $vertical $size={7} />
            <Space $grow={280} />
            <Chevron dir="down" />
          </LunaBar>
        </GridRow>
        <LunaBar $corner>
          <Chevron dir="left" />
          <Space $grow={1} />
          <LunaThumb $size={163}><Ridges /></LunaThumb>
          <Chevron dir="right" />
        </LunaBar>
        <Footer>
          <RecordLabel htmlFor="record">Record:</RecordLabel>
          <RecordButton aria-label="First record"><Triangle dir="first" /></RecordButton>
          <RecordButton aria-label="Previous record"><Triangle dir="left" /></RecordButton>
          <RecordInput id="record" defaultValue="1" />
          <RecordButton aria-label="Next record"><Triangle dir="right" /></RecordButton>
          <RecordButton aria-label="Last record"><Triangle dir="last" /></RecordButton>
          <ShowLabel>Show:</ShowLabel>
          <PushButton $w={27} $pressed>All</PushButton>
          <PushButton $w={55}>Selected</PushButton>
          <RecordCount>{'Records  (0 out of *2000 Selected.)'}</RecordCount>
          <OptionsButton $w={78}>Options <SmallDown /></OptionsButton>
        </Footer>
      </DialogBody>
    </Dialog>
  );
}

/* ---------- drawing tool bar, status bar, task bar ---------- */

const DrawBand = styled(Band)`
  height: 29px;
  border-bottom: 1px solid ${shade};
`;
const DrawMenu = styled.button`
  width: 68px;
  padding: 2px 0 0 3px;
  border: 0;
  background: none;
  display: flex;
  align-items: center;
  gap: 6px;
  text-align: left;
`;
const Drop = styled.button`
  width: 18px;
  height: 24px;
  padding: 0;
  border: 0;
  background: none;
  display: flex;
  align-items: center;
  justify-content: center;
`;
const Letter = styled.span<{ $italic?: boolean; $line?: boolean; $size?: number }>`
  font: ${(p) => (p.$italic ? 'italic ' : '')}700 ${(p) => p.$size ?? 15}px/16px "Liberation Serif", serif;
  text-decoration: ${(p) => (p.$line ? 'underline' : 'none')};
`;
const Inked = styled(Letter)`
  width: 17px;
  line-height: 13px;
  border-bottom: 3px solid #000;
`;
const Combos = styled.div`
  display: flex;
  gap: 7px;
  margin-right: 8px;
`;

const Status = styled.footer`
  height: 19px;
  flex: none;
  display: flex;
  align-items: stretch;
  gap: 2px;
  padding: 3px 2px 0;
  border-top: 1px solid #fff;
`;
const StatusText = styled.span`
  flex: 1;
`;
const StatusCell = styled.span`
  width: 157px;
  border: 1px solid;
  border-color: ${shade} #fff #fff ${shade};
  line-height: 14px;
  white-space: pre;
`;
const Tip = styled.div`
  position: absolute;
  left: 659px;
  bottom: 33px;
  height: 17px;
  padding: 0 2px;
  border: 1px solid #000;
  background: #ffffe1;
  line-height: 15px;
`;

const TaskBar = styled.nav`
  height: 30px;
  flex: none;
  display: flex;
  align-items: stretch;
  background: linear-gradient(#1f48b0 0, #3f8cf3 2px, #2a68de 5px, #245edb 50%, #2561df 85%, #1941a5);
  color: #fff;
`;
const Start = styled.button`
  width: 97px;
  padding: 0 0 0 10px;
  display: flex;
  align-items: center;
  gap: 6px;
  border: 0;
  border-radius: 0 9px 9px 0;
  background: linear-gradient(#2d7a2d 0, #63b863 2px, #3d953d 5px, #3a943a 60%, #41a541 85%, #256b25);
  box-shadow: inset -3px 0 4px #1f6420;
  color: #fff;
  font: italic 700 17px/24px "Open Sans", sans-serif;
  text-shadow: 1px 1px 2px #1c3c1c;
`;
const Quick = styled.div`
  width: 102px;
  display: flex;
  align-items: center;
  gap: 7px;
  padding-left: 12px;
`;
const More = styled.span`
  margin: 0 0 10px 5px;
  font-size: 13px;
`;
const Task = styled.button<{ $active?: boolean }>`
  width: 158px;
  margin: 3px 2px 2px 0;
  padding: 0 0 0 9px;
  display: flex;
  align-items: center;
  gap: 4px;
  border: 0;
  border-radius: 3px;
  white-space: nowrap;
  color: #fff;
  background: ${(p) => (p.$active ? '#1c4fb4' : 'linear-gradient(#5c9cf8, #3c81f3 4px, #3a7df0 80%, #2f6cd8)')};
  box-shadow: ${(p) => (p.$active ? 'inset 1px 1px 2px #0e3484' : 'inset -1px -1px 1px #2a60c8')};
`;
const Lang = styled.span`
  margin-left: auto;
  align-self: center;
  padding: 0 13px 0 4px;
`;
const Tray = styled.div`
  width: 143px;
  display: flex;
  align-items: center;
  gap: 2px;
  background: linear-gradient(#0d5dc8 0, #1fb0f8 2px, #149bec 6px, #1190e6 80%, #0b70c8);
  border-left: 1px solid #0c4fb0;
`;
const TrayToggle = styled.button`
  width: 18px;
  height: 18px;
  margin-left: -10px;
  padding: 0;
  flex: none;
  display: flex;
  align-items: center;
  justify-content: center;
  border: 1px solid #9fd2ff;
  border-radius: 50%;
  background: radial-gradient(circle at 35% 30%, #7ac0ff, #1a6fe0 60%, #0c50c0);
`;
const Clock = styled.span`
  flex: 1;
  padding-right: 12px;
  text-align: right;
  white-space: nowrap;
`;

function WindowsFlag() {
  return (
    <svg width="18" height="18" viewBox="0 0 18 18" aria-hidden="true">
      <path d="M3 2q3-2 6 0L8 8q-3-2-6 0z" fill="#f0592a" />
      <path d="M10 3q3 2 7 0l-1 6q-3 2-7 0z" fill="#8cd33a" />
      <path d="M2 9q3-2 6 0l-1 6q-3-2-6 0z" fill="#4f9cf5" />
      <path d="M9 10q3 2 7 0l-1 6q-3 2-7 0z" fill="#fbc92c" />
    </svg>
  );
}

const menus = ['File', 'Edit', 'View', 'Insert', 'Selection', 'Tools', 'Window', 'Help'];
const classes: [string, number, number][] = [
  ['0', 6, 16], ['1 - 20000', 10, 16], ['20001 - 40000', 16, 16], ['40001 - 80000', 20, 32], ['80001 - 252000', 24, 32],
];

export default function App() {
  return (
    <>
      <GlobalStyle />
      <Screen>
        <TitleBar>
          <Icon name="earthLens" />
          <Caption>production 18-5-2012 fig 1 2007 - ArcMap - ArcView</Caption>
          <WindowControls restore />
        </TitleBar>
        <Menu>
          {menus.map((m) => <button key={m}><u>{m[0]}</u>{m.slice(1)}</button>)}
        </Menu>

        <Band>
          <Grip />
          <Bar $start>
            <Tools names={['new', 'open', 'save', 'print']} />
            <Sep />
            <Tools names={['cut', 'copy', 'paste', 'remove']} />
            <Sep />
            <Tools names={['undo', 'redo']} />
            <Sep />
            <Tools names={['add']} />
            <Sep />
            <Combo w={114} value="1:4.394.898" label="Map scale" size={11} />
            <Sep $gap={5} />
            <Tools names={['edit']} />
            <Sep />
            <Tools names={['catalog', 'toolbox', 'command']} />
            <Sep />
            <Tools names={['whats']} />
          </Bar>
          <Bar>
            <Grip $after={4} />
            <Tools
              names={['zoomIn', 'zoomOut', 'shrink', 'expand', 'hand', 'earth', 'back', 'forward', 'select', 'pointer', 'info', 'find', 'measure', 'bolt']}
              pressed="pointer"
            />
          </Bar>
        </Band>
        <Band>
          <Grip />
          <Bar $start>
            <Tools names={['pageIn', 'pageOut', 'pageHand']} />
            <Sep />
            <Tools names={['pageShrink', 'pageExpand', 'pageWhole', 'pageOne']} />
            <Sep />
            <Tools names={['pageBack', 'pageForward']} />
            <Combo w={48} value="104%" label="Page zoom" size={11} />
            <Sep $gap={5} />
            <Tools names={['draft', 'focus']} />
            <Sep />
            <Tools names={['layout']} />
          </Bar>
        </Band>

        <Workspace>
          <Toc>
            <DockBar>
              <DockLines />
              <DockClose aria-label="Close table of contents">
                <svg width="7" height="7" viewBox="0 0 7 7"><path d="M1 1l5 5M6 1L1 6" stroke="#000" strokeWidth="2" /></svg>
              </DockClose>
            </DockBar>
            <TocFrame>
              <TocBox>
                <Tree>
                  <Node $indent={4}><Twisty aria-label="Collapse" /><Icon name="layers" /><NodeText $bold>Layers</NodeText></Node>
                  <Node $indent={23}><Twisty aria-label="Collapse" /><Icon name="globeStack" /><PathText>C:\Program Files\ArcGIS\data\gree</PathText></Node>
                  <Node $indent={42}>
                    <Twisty aria-label="Collapse" />
                    <CheckLabel><Check type="checkbox" defaultChecked /><NodeText>kapodist</NodeText></CheckLabel>
                  </Node>
                  <Node $indent={93}><NodeText>production.y2007</NodeText></Node>
                  {classes.map(([name, d, h]) => (
                    <Node key={name} $indent={67} $h={h}>
                      <SymbolCell><Disc $d={d} /></SymbolCell>
                      <NodeText $gap={1}>{name}</NodeText>
                    </Node>
                  ))}
                  <Node $indent={23}><Twisty aria-label="Collapse" /><Icon name="globeStack" /><PathText>C:\Documents and Settings\Sidiras</PathText></Node>
                  <Node $indent={42}>
                    <Twisty aria-label="Collapse" />
                    <CheckLabel><Check type="checkbox" defaultChecked /><NodeText>nomoi</NodeText></CheckLabel>
                  </Node>
                  <Node $indent={77}><Swatch /></Node>
                  <Node $indent={23}><Twisty aria-label="Collapse" /><Icon name="database" /><PathText>C:\Documents and Settings\Sidiras</PathText></Node>
                  <Node $indent={57}><Icon name="table" /><NodeText $on>production</NodeText></Node>
                </Tree>
                <LunaBar>
                  <Chevron dir="left" />
                  <Space $grow={2} />
                  <LunaThumb $size={76}><Ridges /></LunaThumb>
                  <Space $grow={114} />
                  <Chevron dir="right" />
                </LunaBar>
              </TocBox>
            </TocFrame>
            <TabRow>
              <Tab $w={44}>Display</Tab>
              <Tab $w={48} $active>Source</Tab>
              <Tab $w={54}>Selection</Tab>
            </TabRow>
          </Toc>

          <MapView>
            <span />
            <RulerTop><HorizontalRuler /></RulerTop>
            <ClassicBar $vertical>
              <ClassicButton aria-label="Scroll up"><Triangle dir="up" /></ClassicButton>
              <Space $grow={152} />
              <ClassicThumb />
              <Space $grow={193} />
              <ClassicButton aria-label="Scroll down"><Triangle dir="down" /></ClassicButton>
            </ClassicBar>
            <RulerSide><VerticalRuler /></RulerSide>
            <Sheet><GreeceMap /></Sheet>
            <ViewBar>
              <ViewTool $w={14} aria-label="Data view"><Icon name="earth" size={10} /></ViewTool>
              <ViewTool $w={20} $pressed aria-label="Layout view"><Icon name="new" size={11} /></ViewTool>
              <ViewSep />
              <ViewTool $w={18} aria-label="Refresh"><Icon name="refresh" size={12} /></ViewTool>
              <ViewTool $w={17} aria-label="Pause drawing"><Icon name="pause" size={12} /></ViewTool>
              <ClassicBar>
                <ClassicButton aria-label="Scroll left"><Triangle dir="left" /></ClassicButton>
                <Space $grow={1} />
                <ClassicButton aria-label="Scroll right"><Triangle dir="right" /></ClassicButton>
              </ClassicBar>
            </ViewBar>
          </MapView>
        </Workspace>

        <DrawBand>
          <Grip />
          <DrawBar $start>
            <DrawMenu><span><u>D</u>rawing</span><Down /></DrawMenu>
            <Tools names={['pointer', 'rotate', 'zoomSel']} pressed="pointer" />
            <Sep />
            <Tools names={['square']} />
            <Drop aria-label="Shapes"><Down /></Drop>
            <Tool $w={26} aria-label="Text"><Letter $size={19}>A</Letter></Tool>
            <Drop aria-label="Text styles"><Down /></Drop>
            <Tools names={['vertices']} w={26} />
            <Sep />
            <Combos>
              <Combo
                w={169}
                value="Arial"
                label="Font"
                icon={<svg width="14" height="16" viewBox="0 0 14 16"><path d="M1 1h9l3 3v11H1z" fill="#dfeafc" stroke="#6a8ac0" /><ellipse cx="7" cy="8" rx="2" ry="4" transform="rotate(20 7 8)" fill="none" stroke="#0a5a3a" strokeWidth="2" /></svg>}
              />
              <Combo w={44} value="10" label="Font size" />
            </Combos>
            <Tool $w={23} aria-label="Bold"><Letter>B</Letter></Tool>
            <Tool $w={23} aria-label="Italic"><Letter $italic>I</Letter></Tool>
            <Tool $w={23} aria-label="Underline"><Letter $line>U</Letter></Tool>
            <Sep />
            <Tool aria-label="Font color"><Inked>A</Inked></Tool>
            <Drop aria-label="Font colors"><Down /></Drop>
            <Tools names={['bucket']} w={26} />
            <Drop aria-label="Fill colors"><Down /></Drop>
            <Tools names={['brush']} w={26} />
            <Drop aria-label="Line colors"><Down /></Drop>
            <Tools names={['dot']} w={26} />
            <Drop aria-label="Marker colors"><Down /></Drop>
          </DrawBar>
        </DrawBand>
        <Status>
          <StatusText>Change the fill color</StatusText>
          <StatusCell>{`20°59'11,08"E  38°3'36,85"N`}</StatusCell>
          <StatusCell>{'6,13  10,04 Centimeters'}</StatusCell>
        </Status>

        <TaskBar>
          <Start><WindowsFlag />start</Start>
          <Quick>
            <Icon name="outlook" />
            <Icon name="ie" />
            <Icon name="media" />
            <More>»</More>
          </Quick>
          <Task><Icon name="folder" />Georgiou Xristina 17-...</Task>
          <Task $active><Icon name="earthLens" />production 18-5-2012...</Task>
          <Task><Icon name="word" />Έγγραφο1 - Microsof...</Task>
          <Lang>EN</Lang>
          <Tray>
            <TrayToggle aria-label="Show hidden icons">
              <svg width="8" height="8" viewBox="0 0 8 8"><path d="M5 1L2 4l3 3" fill="none" stroke="#fff" strokeWidth="2" /></svg>
            </TrayToggle>
            <Icon name="usb" />
            <Icon name="network" />
            <Icon name="target" />
            <Icon name="shield" />
            <Clock>12:42 πμ</Clock>
          </Tray>
        </TaskBar>

        <AttributeWindow />
        <Tip role="tooltip">Fill Color</Tip>
      </Screen>
    </>
  );
}
